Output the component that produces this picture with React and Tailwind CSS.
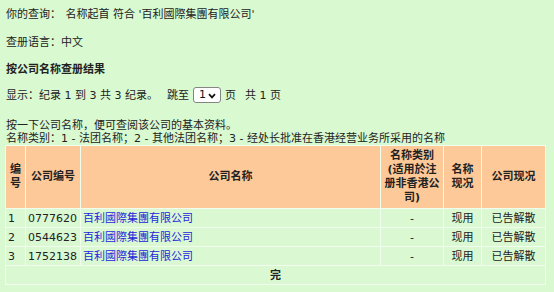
import React from "react";

const rows = [
  { no: 1, id: "0777620" },
  { no: 2, id: "0544623" },
  { no: 3, id: "1752138" },
];

const font = { fontFamily: '"DejaVu Sans", "Noto Sans CJK SC", sans-serif' };

function PageSelect() {
  return (
    <span className="relative inline-flex h-[16px] w-[28px] items-center rounded-[3px] border border-[#858585] bg-white">
      <select
        defaultValue="1"
        className="h-full w-full appearance-none bg-transparent pl-[5px] text-[11px] leading-[14px] text-[#111] outline-none"
      >
        <option value="1">1</option>
      </select>
      <svg
        className="pointer-events-none absolute right-[4px] top-[5px]"
        width="8"
        height="6"
        viewBox="0 0 8 6"
      >
        <path d="M1 1.2 L4 4.4 L7 1.2" fill="none" stroke="#111" strokeWidth="1.7" />
      </svg>
    </span>
  );
}

export default function App() {
  return (
    <div
      className="min-h-[292px] w-full bg-[#d9f9d1] px-[5px] pt-[8px] text-[11px] leading-[13px] text-[#222]"
      style={font}
    >
      <div className="whitespace-pre pl-[1px]">
        你的查询：<span className="ml-[1px]"> 名称起首 符合 '百利國際集團有限公司'</span>
      </div>
      <div className="mt-[15px] pl-[1px]">查册语言：中文</div>
      <div className="mt-[14px] pl-[1px] font-bold">按公司名称查册结果</div>
      <div className="mt-[10px] flex h-[18px] items-center whitespace-pre pl-[1px]">
        <span>显示：纪录 1 到 3 共 3 纪录。</span>
        <span className="ml-[9px] mr-[4px]">跳至</span>
        <PageSelect />
        <span className="ml-[4px]">页</span>
        <span className="ml-[9px]">共 1 页</span>
      </div>
      <div className="mt-[15px] pl-[1px]">按一下公司名称，便可查阅该公司的基本资料。</div>
      <div className="pl-[1px]">
        名称类别：1 - 法团名称；2 - 其他法团名称；3 - 经处长批准在香港经营业务所采用的名称
      </div>

      <table className="w-[541px] table-fixed border-separate border-spacing-[1px] bg-[#f1fded] leading-[14px]">
        <thead>
          <tr className="bg-[#fec998] font-bold">
            <th className="h-[62px] w-[19px] px-[2px] py-0 text-center align-middle">
              编<br />号
            </th>
            <th className="w-[54px] px-[2px] text-center align-middle">公司编号</th>
            <th className="w-[299px] px-[2px] text-center align-middle">公司名称</th>
            <th className="w-[62px] px-[2px] text-center align-middle">
              名称类别
              <br />
              (适用於注
              <br />
              册非香港公
              <br />
              司)
            </th>
            <th className="w-[37px] px-[2px] text-center align-middle">
              名称
              <br />
              现况
            </th>
            <th className="w-[63px] px-[2px] text-center align-middle">公司现况</th>
          </tr>
        </thead>
        <tbody>
          {rows.map((r) => (
            <tr key={r.id} className="bg-[#daf9d3]">
              <td className="h-[18px] px-[2px] pt-[3px] pb-[1px]">{r.no}</td>
              <td className="px-[2px] pt-[3px] pb-[1px]">{r.id}</td>
              <td className="px-[2px] pt-[3px] pb-[1px]">
                <a href="#" className="text-[#2424dc]">
                  百利國際集團有限公司
                </a>
              </td>
              <td className="px-[2px] pt-[3px] pb-[1px] text-center">-</td>
              <td className="px-[2px] pt-[3px] pb-[1px] text-center">现用</td>
              <td className="px-[2px] pt-[3px] pb-[1px] text-center">已告解散</td>
            </tr>
          ))}
          <tr className="bg-[#daf9d3]">
            <td colSpan={6} className="h-[18px] px-[2px] pt-[3px] pb-[1px] text-center font-bold">
              完
            </td>
          </tr>
        </tbody>
      </table>
    </div>
  );
}
